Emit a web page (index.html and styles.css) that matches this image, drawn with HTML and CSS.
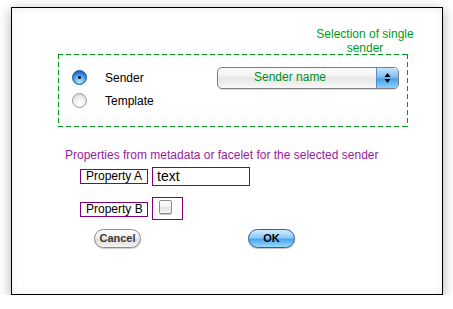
FILE: index.html
```html
<!DOCTYPE html>
<html>
<head>
<meta charset="utf-8">
<link rel="stylesheet" href="styles.css">
</head>
<body>
<div class="window">
  <div class="caption">Selection of single sender</div>
  <div class="selection-box">
    <div class="choices">
      <div class="choice"><span class="radio radio-on"></span><span class="choice-label">Sender</span></div>
      <div class="choice"><span class="radio"></span><span class="choice-label">Template</span></div>
    </div>
    <div class="select">
      <span class="select-value">Sender name</span>
      <span class="select-arrows">
        <svg width="7" height="12" viewBox="0 0 7 12"><path d="M3.5 1 L6.5 5 L0.5 5 Z" fill="#000"/><path d="M0.5 7 L6.5 7 L3.5 11 Z" fill="#000"/></svg>
      </span>
    </div>
  </div>
  <div class="props-heading">Properties from metadata or facelet for the selected sender</div>
  <div class="prop-row prop-row-a">
    <span class="prop-label">Property A</span>
    <span class="text-field">text</span>
  </div>
  <div class="prop-row prop-row-b">
    <span class="prop-label">Property B</span>
    <span class="check-wrap"><span class="checkbox"></span></span>
  </div>
  <div class="buttons">
    <span class="btn btn-cancel">Cancel</span>
    <span class="btn btn-ok">OK</span>
  </div>
</div>
</body>
</html>
```
FILE: styles.css
```css
html, body {
  margin: 0;
  padding: 0;
  background: #fff;
}
body {
  font-family: "Liberation Sans", Arial, sans-serif;
  font-size: 12px;
  color: #000;
}
.window {
  margin: 7px 0 0 11px;
  width: 430px;
  height: 286px;
  border: 1px solid #000;
  background: #fff;
  box-shadow: 0 3px 12px rgba(0,0,0,0.32), inset 0 0 9px rgba(0,0,0,0.07);
  display: flex;
  flex-direction: column;
}
.caption {
  margin: 19px 0 0 298px;
  width: 110px;
  text-align: center;
  line-height: 14px;
  height: 28px;
  color: #009a1a;
}
.selection-box {
  margin: -1px 0 0 46px;
  width: 350px;
  height: 73px;
  box-sizing: border-box;
  padding: 12px 9px 1px 14px;
  display: flex;
  align-items: flex-start;
  background:
    repeating-linear-gradient(90deg, #009a1a 0 5px, transparent 5px 8px) left top / 100% 1px no-repeat,
    repeating-linear-gradient(90deg, #009a1a 0 5px, transparent 5px 8px) left bottom / 100% 1px no-repeat,
    repeating-linear-gradient(180deg, #009a1a 0 5px, transparent 5px 8px) left top / 1px 100% no-repeat,
    repeating-linear-gradient(180deg, #009a1a 0 5px, transparent 5px 8px) right top / 1px 100% no-repeat;
  box-shadow: inset 0 4px 6px -4px rgba(0,0,0,0.06);
}
.choices {
  display: flex;
  flex-direction: column;
}
.choice {
  display: flex;
  align-items: center;
  height: 23px;
}
.radio {
  width: 15px;
  height: 15px;
  box-sizing: border-box;
  border-radius: 50%;
  border: 1px solid #9a9a9a;
  background: radial-gradient(circle at 50% 75%, #ffffff 0%, #f0f0f0 45%, #cfcfcf 100%);
  margin-right: 18px;
  position: relative;
}
.radio-on {
  border-color: #1c4f9c;
  background: radial-gradient(circle at 50% 80%, #bfe6ff 0%, #5cb0f0 40%, #1e6fd0 75%, #154d9e 100%);
}
.radio-on::after {
  content: "";
  position: absolute;
  left: 5px;
  top: 5px;
  width: 3px;
  height: 3px;
  border-radius: 50%;
  background: #000;
}
.choice-label {
  line-height: 14px;
}
.select {
  margin: 1px 0 0 auto;
  width: 182px;
  height: 22px;
  box-sizing: border-box;
  border: 1px solid #7d7d7d;
  border-radius: 5px;
  display: flex;
  overflow: hidden;
  background: linear-gradient(#fbfbfb 0%, #f4f4f4 40%, #e6e6e6 50%, #f0f0f0 80%, #fafafa 100%);
  box-shadow: 0 1px 1px rgba(0,0,0,0.15);
}
.select-value {
  flex: 1;
  padding-left: 36px;
  line-height: 19px;
  color: #00901a;
}
.select-arrows {
  width: 21px;
  display: flex;
  align-items: center;
  justify-content: center;
  border-left: 1px solid #5a8fc8;
  background: linear-gradient(#c6e4fb 0%, #7fc0f4 45%, #4aa2ec 55%, #8fd0ff 100%);
}
.props-heading {
  margin: 21px 0 0 53px;
  line-height: 14px;
  color: #9a1a9a;
}
.prop-row {
  display: flex;
  align-items: center;
  margin-left: 68px;
  gap: 4px;
}
.prop-row-a {
  margin-top: 5px;
  height: 19px;
}
.prop-row-b {
  margin-top: 11px;
  height: 23px;
}
.prop-label {
  width: 68px;
  box-sizing: border-box;
  border: 1px solid #800080;
  padding-left: 5px;
  line-height: 13px;
  font-size: 12px;
  white-space: nowrap;
}
.prop-row-b .prop-label {
  margin-top: 2px;
}
.text-field {
  width: 98px;
  height: 19px;
  box-sizing: border-box;
  border: 1px solid #800080;
  padding-left: 4px;
  line-height: 16px;
  font-size: 14px;
}
.check-wrap {
  width: 31px;
  height: 23px;
  box-sizing: border-box;
  border: 1px solid #800080;
  padding: 2px 0 0 6px;
}
.checkbox {
  display: block;
  width: 13px;
  height: 14px;
  box-sizing: border-box;
  border: 1px solid #8c8c8c;
  border-radius: 2px;
  background: linear-gradient(#ffffff 0%, #f2f2f2 50%, #e2e2e2 55%, #f7f7f7 100%);
  box-shadow: 0 1px 0 #c8c8c8;
}
.buttons {
  display: flex;
  margin: 9px 0 0 82px;
  gap: 107px;
}
.btn {
  width: 47px;
  height: 19px;
  box-sizing: border-box;
  border-radius: 10px;
  text-align: center;
  line-height: 17px;
  font-family: "Liberation Sans Narrow", "Liberation Sans", Arial, sans-serif;
  font-weight: bold;
  font-size: 11px;
}
.btn-cancel {
  border: 1px solid #8c8c8c;
  color: #3a3a3a;
  background: linear-gradient(#fdfdfd 0%, #f0f0f0 45%, #dcdcdc 55%, #f4f4f4 100%);
  box-shadow: 0 1px 1px rgba(0,0,0,0.2);
}
.btn-ok {
  border: 1px solid #2b5f9e;
  color: #000;
  background: linear-gradient(#d2ecff 0%, #8ccaf7 45%, #4aa5ee 55%, #9ad8ff 100%);
  box-shadow: 0 1px 1px rgba(0,0,0,0.25);
}
```
